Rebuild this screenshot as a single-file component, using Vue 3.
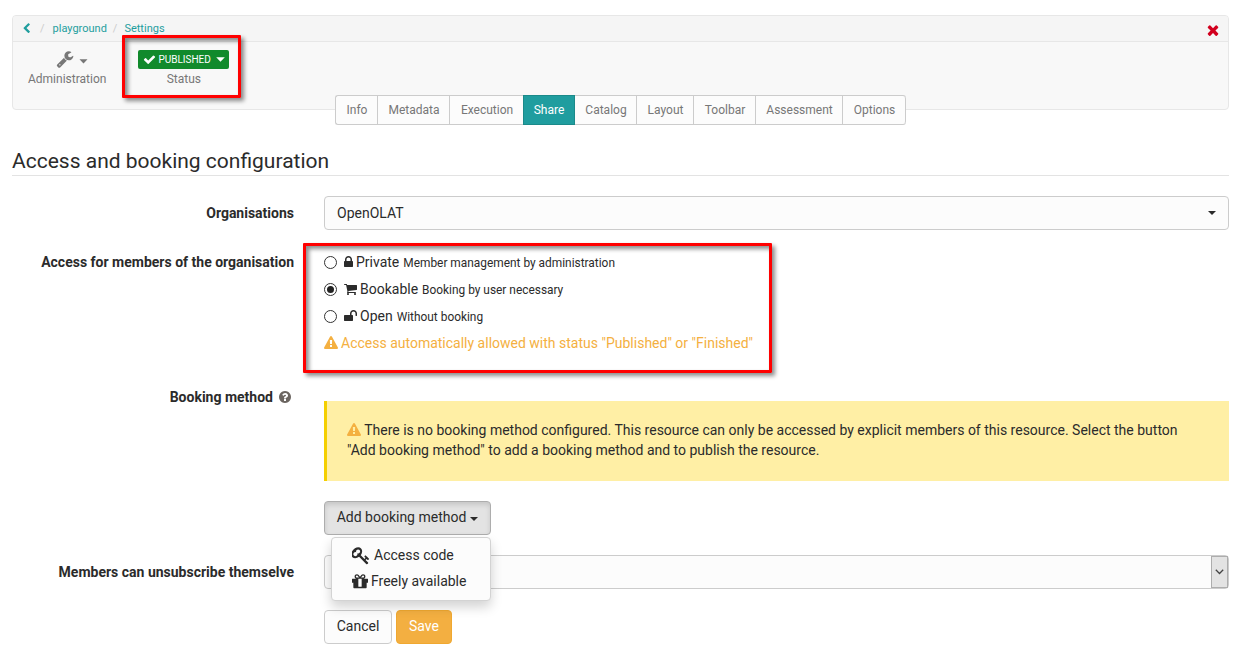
<script setup>
const tabs = ['Info', 'Metadata', 'Execution', 'Share', 'Catalog', 'Layout', 'Toolbar', 'Assessment', 'Options']

const warnPath = 'M1024 1375v-190q0-14-9.500-23.500t-22.500-9.500h-192q-13 0-22.500 9.500t-9.500 23.500v190q0 14 9.500 23.500t22.500 9.500h192q13 0 22.500-9.500t9.500-23.500zm-2-374l18-459q0-12-10-19-13-11-24-11h-220q-11 0-24 11-10 7-10 21l17 457q0 10 10 16.500t24 6.500h185q14 0 23.500-6.500t10.500-16.500zm-14-934l768 1408q35 63-2 126-17 29-46.500 46t-63.500 17h-1536q-34 0-63.500-17t-46.500-46q-37-63-2-126l768-1408q17-31 47-49t65-18 65 18 47 49z'

const options = [
  {
    name: 'Private', hint: 'Member management by administration', checked: false, width: 9, box: '320 0 1152 1792',
    path: 'M640 768h512v-192q0-106-75-181t-181-75-181 75-75 181v192zm832 96v576q0 40-28 68t-68 28h-960q-40 0-68-28t-28-68v-576q0-40 28-68t68-28h32v-192q0-184 132-316t316-132 316 132 132 316v192h32q40 0 68 28t28 68z',
  },
  {
    name: 'Bookable', hint: 'Booking by user necessary', checked: true, width: 13, box: '64 0 1664 1792',
    path: 'M704 1536q0 52-38 90t-90 38-90-38-38-90 38-90 90-38 90 38 38 90zm896 0q0 52-38 90t-90 38-90-38-38-90 38-90 90-38 90 38 38 90zm128-1088v512q0 24-16.500 42.500t-40.500 21.500l-1044 122q13 60 13 70 0 16-24 64h920q26 0 45 19t19 45-19 45-45 19h-1024q-26 0-45-19t-19-45q0-11 8-31.500t16-36 21.500-40 15.500-29.500l-177-823h-204q-26 0-45-19t-19-45 19-45 45-19h256q16 0 28.500 6.500t19.500 15.500 13 24.500 8 26 5.500 29.500 4.500 26h1201q26 0 45 19t19 45z',
  },
  {
    name: 'Open', hint: 'Without booking', checked: false, width: 13, box: '64 0 1664 1792',
    path: 'M1728 576v256q0 26-19 45t-45 19h-64q-26 0-45-19t-19-45v-256q0-106-75-181t-181-75-181 75-75 181v192h96q40 0 68 28t28 68v576q0 40-28 68t-68 28h-960q-40 0-68-28t-28-68v-576q0-40 28-68t68-28h672v-192q0-185 131.500-316.500t316.500-131.500 316.500 131.500 131.500 316.500z',
  },
]
</script>

<template>
  <div class="page">
    <header class="panel">
      <nav class="crumbs">
        <svg class="back" viewBox="0 0 1792 1792"><path d="M1427 301l-531 531 531 531q19 19 19 45t-19 45l-166 166q-19 19-45 19t-45-19l-742-742q-19-19-19-45t19-45l742-742q19-19 45-19t45 19l166 166q19 19 19 45t-19 45z" /></svg>
        <span class="sep">/</span><a>playground</a><span class="sep sep2">/</span><a>Settings</a>
        <svg class="close" viewBox="0 0 1792 1792"><path d="M1490 1322q0 40-28 68l-136 136q-28 28-68 28t-68-28l-294-294-294 294q-28 28-68 28t-68-28l-136-136q-28-28-28-68t28-68l294-294-294-294q-28-28-28-68t28-68l136-136q28-28 68-28t68 28l294 294 294-294q28-28 68-28t68 28l136 136q28 28 28 68t-28 68l-294 294 294 294q28 28 28 68z" /></svg>
      </nav>
      <div class="tools">
        <div class="tool admin">
          <div class="tool-icon">
            <svg class="wrench" viewBox="0 0 1792 1792"><path d="M448 1472q0-26-19-45t-45-19-45 19-19 45 19 45 45 19 45-19 19-45zm644-420l-682 682q-37 37-90 37-52 0-91-37l-106-108q-38-36-38-90 0-53 38-91l681-681q39 98 114.500 173.500t173.500 114.500zm634-435q0 39-23 106-47 134-164.500 217.500t-258.500 83.500q-185 0-316.500-131.500t-131.500-316.500 131.500-316.500 316.500-131.500q58 0 121.500 16.500t107.500 46.500q16 11 16 28t-16 28l-293 169v224l193 107q5-3 79-48.500t135.500-81 70.500-35.500q15 0 23.500 10t8.500 25z" /></svg>
            <svg class="caret-gray" viewBox="0 0 9 5"><path d="M.5.3h8L4.5 4.600z" /></svg>
          </div>
          <span>Administration</span>
        </div>
        <div class="tool status">
          <div class="badge">
            <svg class="check" viewBox="0 0 1792 1792"><path d="M1671 566q0 40-28 68l-724 724-136 136q-28 28-68 28t-68-28l-136-136-362-362q-28-28-28-68t28-68l136-136q28-28 68-28t68 28l294 295 656-657q28-28 68-28t68 28l136 136q28 28 28 68z" /></svg>
            <span>PUBLISHED</span>
            <svg class="badge-caret" viewBox="0 0 9 5"><path d="M.2.2h8.600L4.500 4.800z" /></svg>
          </div>
          <span>Status</span>
        </div>
      </div>
      <div class="frame frame-status"></div>
    </header>

    <div class="tabs">
      <div v-for="t in tabs" :key="t" class="tab" :class="{ active: t === 'Share' }">{{ t }}</div>
    </div>

    <h1>Access and booking configuration</h1>

    <div class="row organisations">
      <label>Organisations</label>
      <div class="select">OpenOLAT<i class="caret"></i></div>
    </div>

    <div class="row access">
      <label>Access for members of the organisation</label>
      <div class="choices">
        <div v-for="o in options" :key="o.name" class="choice">
          <span class="radio" :class="{ on: o.checked }"></span>
          <svg :viewBox="o.box" :width="o.width" height="14"><path :d="o.path" /></svg>
          <span class="name">{{ o.name }}</span>
          <small>{{ o.hint }}</small>
        </div>
        <div class="notice">
          <svg viewBox="0 0 1792 1792" width="14" height="14"><path :d="warnPath" /></svg>
          <span>Access automatically allowed with status "Published" or "Finished"</span>
        </div>
        <div class="frame frame-access"></div>
      </div>
    </div>

    <div class="row booking">
      <label>Booking method<svg class="help" viewBox="128 128 1536 1536"><path d="M1024 1376v-192q0-14-9-23t-23-9h-192q-14 0-23 9t-9 23v192q0 14 9 23t23 9h192q14 0 23-9t9-23zm256-672q0-88-55.500-163t-138.500-116-170-41q-243 0-371 213-15 24 8 42l132 100q7 6 19 6 16 0 25-12 53-68 86-92 34-24 86-24 48 0 85.500 26t37.500 59q0 38-20 61t-68 45q-63 28-115.500 86.500t-52.500 125.500v36q0 14 9 23t23 9h192q14 0 23-9t9-23q0-19 21.500-49.500t54.500-49.500q32-18 49-28.500t46-35 44.500-48 28-60.500 12.500-81zm384 192q0 209-103 385.500t-279.500 279.500-385.500 103-385.500-103-279.500-279.500-103-385.500 103-385.500 279.500-279.500 385.500-103 385.500 103 279.500 279.500 103 385.500z" /></svg></label>
      <div class="booking-body">
        <div class="alert">
          <svg viewBox="0 0 1792 1792" width="14" height="14"><path :d="warnPath" /></svg>
          There is no booking method configured. This resource can only be accessed by explicit members of this resource. Select the button<br>"Add booking method" to add a booking method and to publish the resource.
        </div>
        <div class="dropdown">
          <div class="btn pressed">Add booking method<i class="caret"></i></div>
          <div class="menu">
            <div class="item">
              <svg viewBox="64 0 1700 1792" width="18" height="19"><path d="M832 512q0-80-56-136t-136-56-136 56-56 136q0 42 19 83-41-19-83-19-80 0-136 56t-56 136 56 136 136 56 136-56 56-136q0-42-19-83 41 19 83 19 80 0 136-56t56-136zm851 704q0 17-49 66t-66 49q-9 0-28.500-16t-36.500-33-38.500-40-24.500-26l-96 96 220 220q28 28 28 68 0 42-39 81t-81 39q-40 0-68-28l-671-671q-176 131-365 131-163 0-265.500-102.500t-102.500-265.500q0-160 95-313t248-248 313-95q163 0 265.500 102.500t102.500 265.500q0 189-131 365l355 355 96-96q-3-3-26-24.500t-40-38.500-33-36.500-16-28.500q0-17 49-66t66-49q13 0 23 10 6 6 46 44.500t82 79.500 86.500 86 73 78 28.500 41z" /></svg>
              <span>Access code</span>
            </div>
            <div class="item gift">
              <svg viewBox="128 0 1536 1792" width="16" height="19"><path d="M1056 1356v-716h-320v716q0 25 18 38.500t46 13.500h192q28 0 46-13.500t18-38.500zm-456-844h195l-126-161q-26-31-69-31-40 0-68 28t-28 68 28 68 68 28zm688-96q0-40-28-68t-68-28q-43 0-69 31l-125 161h194q40 0 68-28t28-68zm376 256v320q0 14-9 23t-23 9h-96v416q0 40-28 68t-68 28h-1088q-40 0-68-28t-28-68v-416h-96q-14 0-23-9t-9-23v-320q0-14 9-23t23-9h440q-93 0-158.500-65.500t-65.500-158.500 65.500-158.500 158.500-65.500q107 0 168 77l128 165 128-165q61-77 168-77 93 0 158.500 65.500t65.500 158.500-65.500 158.500-158.500 65.500h440q14 0 23 9t9 23z" /></svg>
              <span>Freely available</span>
            </div>
          </div>
        </div>
      </div>
    </div>

    <div class="row unsubscribe">
      <label>Members can unsubscribe themselve</label>
      <div class="native">
        <div class="arrow"><svg viewBox="0 0 9 6"><path d="M.8.8l3.700 3.700L8.200.8" fill="none" stroke="#444" stroke-width="1.300" /></svg></div>
      </div>
    </div>

    <div class="actions">
      <div class="btn">Cancel</div>
      <div class="btn save">Save</div>
    </div>
  </div>
</template>

<style>
body {
  margin: 0;
  background: #fff;
}
</style>

<style scoped>
* {
  box-sizing: border-box;
}
.page {
  width: 1243px;
  height: 661px;
  padding: 15px 14px 0 12px;
  font: 14px/20px Roboto, "Liberation Sans", sans-serif;
  color: #2b2b2b;
  overflow: hidden;
}
svg {
  fill: currentColor;
  flex: none;
  display: block;
}
.panel {
  position: relative;
  height: 95px;
  background: #f8f8f8;
  border: 1px solid #e7e7e7;
  border-radius: 4px;
}
.crumbs {
  display: flex;
  align-items: center;
  height: 26px;
  padding: 0 10px 0 8px;
  background: #f5f5f5;
  border-bottom: 1px solid #e7e7e7;
  border-radius: 3px 3px 0 0;
  font-size: 11px;
  color: #1f9e9e;
}
.back {
  width: 11px;
  height: 11px;
}
.sep {
  margin: 0 8px;
  color: #ccc;
}
.sep2 {
  margin: 0 7px 0 6px;
}
.close {
  width: 16px;
  height: 16px;
  margin: 3px -3px 0 auto;
  color: #d2001e;
}
.tools {
  display: flex;
  gap: 32px;
  padding: 8px 0 0 15px;
  font-size: 12px;
  line-height: 17px;
  color: #777;
}
.tool {
  text-align: center;
}
.tool-icon {
  display: flex;
  justify-content: center;
  height: 21px;
  padding-left: 10px;
  gap: 5px;
}
.wrench {
  width: 18px;
  height: 18px;
}
.caret-gray {
  width: 9px;
  height: 5px;
  margin-top: 9px;
}
.badge {
  display: flex;
  align-items: center;
  width: 91px;
  height: 19px;
  margin-bottom: 2px;
  padding: 0 4px 0 5px;
  border-radius: 2px;
  background: #118a2c;
  color: #fff;
  font-size: 10px;
}
.check {
  width: 13px;
  height: 13px;
  margin-right: 2px;
}
.badge-caret {
  width: 9px;
  height: 5px;
  margin-left: auto;
}
.frame {
  position: absolute;
  border: 3px solid #f00;
  border-radius: 1px;
  box-shadow: 3px 3px 4px rgba(0, 0, 0, 0.45), inset 3px 3px 4px rgba(0, 0, 0, 0.45);
}
.frame-status {
  left: 109px;
  top: 19px;
  width: 119px;
  height: 63px;
}
.tabs {
  position: relative;
  display: grid;
  grid-template-columns: 42px 72px 74px 51px 62px 57px 62px 87px 64px;
  width: 571px;
  height: 30px;
  margin: -15px 0 0 323px;
  border: 1px solid #ccc;
  border-right: 0;
  border-radius: 3px;
  background: #fcfcfc;
  font-size: 12px;
  line-height: 28px;
  text-align: center;
  color: #777;
}
.tab {
  padding-left: 1px;
  border-right: 1px solid #ccc;
}
.tab:last-child {
  margin-right: 1px;
  border-radius: 0 3px 3px 0;
}
.tab.active {
  margin: -1px 0 -1px -1px;
  padding: 0;
  border: 1px solid #1b8a8a;
  background: #209d9f;
  color: #fff;
}
h1 {
  height: 31px;
  margin: 20px 0 0;
  border-bottom: 1px solid #e3e3e3;
  font-size: 21px;
  line-height: 33px;
  font-weight: 400;
}
.row {
  display: grid;
  grid-template-columns: 282px 905px;
  column-gap: 30px;
}
label {
  text-align: right;
  font-weight: 700;
}
.select {
  display: flex;
  align-items: center;
  justify-content: space-between;
  height: 34px;
  padding: 0 12px;
  border: 1px solid #ccc;
  border-radius: 4px;
  background: #fcfcfc;
}
.caret {
  width: 0;
  height: 0;
  border: 4px solid transparent;
  border-top-color: currentColor;
  border-bottom: 0;
}
.organisations {
  margin-top: 20px;
}
.organisations label {
  padding-top: 7px;
}
.access {
  margin-top: 22px;
  height: 101px;
}
.choices {
  position: relative;
}
.choice {
  display: flex;
  align-items: center;
  height: 20px;
  margin-bottom: 7px;
}
.radio {
  width: 13px;
  height: 13px;
  margin: 1px 7px 0 0;
  border: 1px solid #333;
  border-radius: 50%;
  background: #fff;
}
.radio.on {
  padding: 2px;
  background: #222 content-box;
}
.name {
  margin: 0 4px 0 3px;
}
small {
  font-size: 11.900px;
  padding-top: 1px;
}
.notice {
  display: flex;
  align-items: center;
  gap: 3px;
  color: #f4b041;
}
.frame-access {
  left: -21px;
  top: -9px;
  width: 469px;
  height: 130px;
}
.booking {
  margin-top: 34px;
}
.help {
  display: inline-block;
  width: 12px;
  height: 12px;
  margin: 0 3px 0 6px;
  vertical-align: -1px;
  color: #6b6560;
}
.booking-body {
  padding-top: 14px;
}
.alert {
  height: 80px;
  padding: 19px 20px;
  border-left: 3px solid #f4cf00;
  background: #ffefa5;
  white-space: nowrap;
}
.alert svg {
  display: inline-block;
  vertical-align: -2px;
  color: #f4b041;
}
.dropdown {
  position: relative;
  margin-top: 20px;
  height: 34px;
}
.btn {
  display: flex;
  align-items: center;
  justify-content: center;
  height: 34px;
  width: 68px;
  padding-bottom: 2px;
  border: 1px solid #ccc;
  border-radius: 4px;
  background: #fcfcfc;
}
.btn.pressed {
  width: 167px;
  gap: 4px;
  border-color: #adadad;
  background: #e3e3e3;
  box-shadow: inset 0 3px 5px rgba(0, 0, 0, 0.125);
}
.pressed .caret {
  margin-top: 4px;
}
.menu {
  position: absolute;
  left: 7px;
  top: 36px;
  width: 160px;
  height: 64px;
  padding: 4px 0 0 20px;
  border: 1px solid #d3d3d3;
  border-radius: 4px;
  background: #fcfcfc;
  box-shadow: 0 6px 12px rgba(0, 0, 0, 0.175);
}
.item {
  display: flex;
  align-items: center;
  height: 26px;
  gap: 4px;
}
.gift {
  gap: 3px;
}
.unsubscribe {
  margin-top: 20px;
}
.unsubscribe label {
  padding-top: 7px;
}
.native {
  display: flex;
  justify-content: flex-end;
  height: 34px;
  border: 1px solid #ccc;
  border-radius: 4px;
  background: #fcfcfc;
}
.arrow {
  display: flex;
  align-items: center;
  justify-content: center;
  width: 17px;
  height: 32px;
  border: 1px solid #adadad;
  background: #e3e3e3;
}
.arrow svg {
  width: 9px;
  height: 6px;
}
.actions {
  display: flex;
  gap: 4px;
  margin: 21px 0 0 312px;
}
.save {
  width: 56px;
  border-color: #f0a830;
  background: #f3af41;
  color: #fff;
}
</style>
